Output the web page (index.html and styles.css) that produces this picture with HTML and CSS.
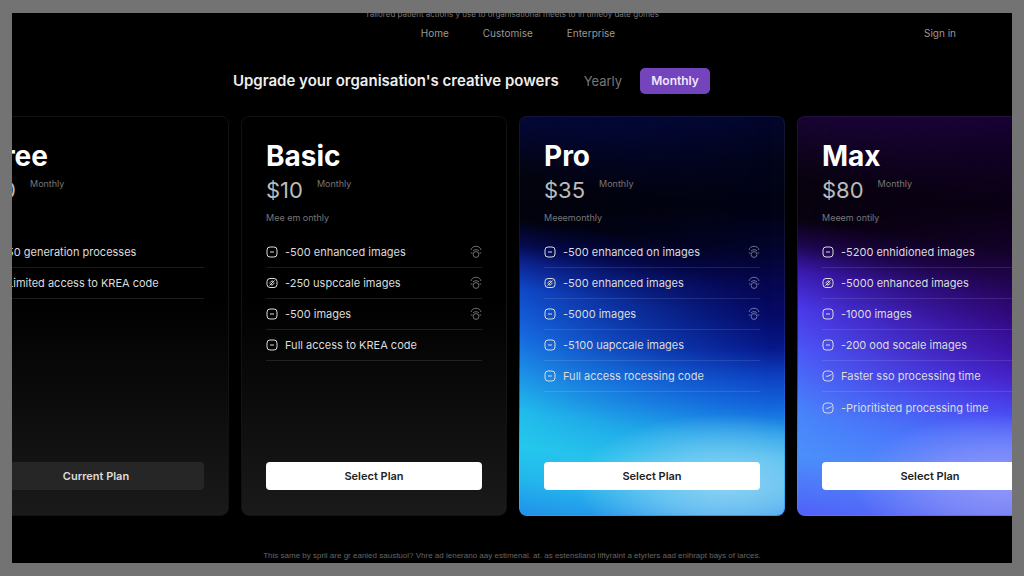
FILE: index.html
```html
<!DOCTYPE html>
<html lang="en">
<head>
<meta charset="utf-8">
<meta name="viewport" content="width=device-width, initial-scale=1">
<title>Upgrade plans</title>
<link rel="stylesheet" href="styles.css">
</head>
<body>
<svg class="sprite" aria-hidden="true">
  <symbol id="box" viewBox="0 0 12 12"><rect x="1" y="1" width="10" height="10" rx="3"/><path d="M4 6h4"/></symbol>
  <symbol id="slash" viewBox="0 0 12 12"><rect x="1" y="1.500" width="10" height="9" rx="3"/><path d="M3.500 8.500l5-5M4 6.500c0-2 1.500-2.500 3-2.500M8 5.500c0 2-1.500 2.500-3 2.500"/></symbol>
  <symbol id="check" viewBox="0 0 12 12"><rect x="1" y="1" width="10" height="10" rx="3.5"/><path d="M4 6.200h2L9.500 4.500"/></symbol>
  <symbol id="info" viewBox="0 0 12 14"><path d="M1 5C1.600 2.500 3.500 1.300 6 1.300S10.400 2.500 11 5M3 6c1-1.700 5-1.700 6 0M.800 8H2.500M9.500 8h1.700"/><circle cx="6" cy="9.500" r="2.900"/></symbol>
</svg>
<div class="frame">
  <p class="announcement">Tailored patient actions y'use to organisational meets to in timeoy date gomes</p>
  <header class="topbar">
    <nav class="nav">
      <a href="#">Home</a>
      <a href="#">Customise</a>
      <a href="#">Enterprise</a>
    </nav>
    <a class="signin" href="#">Sign in</a>
  </header>
  <main>
    <div class="billing">
      <h1>Upgrade your organisation's creative powers</h1>
      <div class="toggle">
        <button type="button" class="period">Yearly</button>
        <button type="button" class="period active">Monthly</button>
      </div>
    </div>
    <div class="plans">
      <section class="card">
        <h2>Free</h2>
        <p class="price"><span>$0</span><small>Monthly</small></p>
        <p class="note"></p>
        <ul>
          <li><svg><use href="#box"/></svg><span>50 generation processes</span></li>
          <li><svg><use href="#box"/></svg><span>Limited access to KREA code</span></li>
        </ul>
        <button type="button" class="select current">Current Plan</button>
      </section>
      <section class="card">
        <h2>Basic</h2>
        <p class="price"><span>$10</span><small>Monthly</small></p>
        <p class="note">Mee em onthly</p>
        <ul>
          <li><svg><use href="#box"/></svg><span>-500 enhanced images</span><svg class="info"><use href="#info"/></svg></li>
          <li><svg><use href="#slash"/></svg><span>-250 uspccale images</span><svg class="info"><use href="#info"/></svg></li>
          <li><svg><use href="#box"/></svg><span>-500 images</span><svg class="info"><use href="#info"/></svg></li>
          <li><svg><use href="#box"/></svg><span>Full access to KREA code</span></li>
        </ul>
        <button type="button" class="select">Select Plan</button>
      </section>
      <section class="card pro">
        <h2>Pro</h2>
        <p class="price"><span>$35</span><small>Monthly</small></p>
        <p class="note">Meeemonthly</p>
        <ul>
          <li><svg><use href="#box"/></svg><span>-500 enhanced on images</span><svg class="info"><use href="#info"/></svg></li>
          <li><svg><use href="#slash"/></svg><span>-500 enhanced images</span><svg class="info"><use href="#info"/></svg></li>
          <li><svg><use href="#box"/></svg><span>-5000 images</span><svg class="info"><use href="#info"/></svg></li>
          <li><svg><use href="#box"/></svg><span>-5100 uapccale images</span></li>
          <li><svg><use href="#box"/></svg><span>Full access rocessing code</span></li>
        </ul>
        <button type="button" class="select">Select Plan</button>
      </section>
      <section class="card max">
        <h2>Max</h2>
        <p class="price"><span>$80</span><small>Monthly</small></p>
        <p class="note">Meeem ontily</p>
        <ul>
          <li><svg><use href="#box"/></svg><span>-5200 enhidioned images</span></li>
          <li><svg><use href="#slash"/></svg><span>-5000 enhanced images</span></li>
          <li><svg><use href="#box"/></svg><span>-1000 images</span></li>
          <li><svg><use href="#box"/></svg><span>-200 ood socale images</span></li>
          <li><svg><use href="#check"/></svg><span>Faster sso processing time</span></li>
          <li><svg><use href="#check"/></svg><span>-Prioritisted processing time</span></li>
        </ul>
        <button type="button" class="select">Select Plan</button>
      </section>
    </div>
  </main>
  <footer class="footnote">This same by spril are gr eanied saustuol? Vhre ad lenerano aay estimenal. at. as estensliand liftyraint a etyrlers aad enihrapt bays of iarces.</footer>
</div>
</body>
</html>
```
FILE: styles.css
```css
* {
  box-sizing: border-box;
  margin: 0;
  padding: 0;
}

body {
  display: flex;
  min-height: 100vh;
  padding: 13px 12px;
  background: #737373;
  color: #e6e6e6;
  font-family: Inter, "Liberation Sans", sans-serif;
}

a {
  color: inherit;
  text-decoration: none;
}

button {
  border: 0;
  font: inherit;
  cursor: pointer;
}

.sprite {
  position: absolute;
  width: 0;
  height: 0;
}

.frame {
  flex: 1;
  min-width: 0;
  overflow: hidden;
  background: #000;
}

.announcement {
  margin-top: -5px;
  color: #777;
  font-size: 8px;
  line-height: 12px;
  text-align: center;
}

.topbar {
  display: grid;
  grid-template-columns: 1fr auto 1fr;
  align-items: center;
  margin-top: 3px;
  padding: 0 56px 0 68px;
  color: #999;
  font-size: 10px;
  line-height: 20px;
}

.nav {
  display: flex;
  grid-column: 2;
  gap: 34px;
}

.signin {
  justify-self: end;
}

.billing {
  display: flex;
  align-items: center;
  justify-content: center;
  gap: 25px;
  margin-top: 25px;
  padding-right: 81px;
}

h1 {
  color: #eee;
  font-size: 15px;
  font-weight: 600;
  line-height: 26px;
}

.toggle {
  display: flex;
  gap: 18px;
}

.period {
  background: none;
  color: #777;
  font-size: 13px;
  line-height: 26px;
}

.active {
  width: 70px;
  border-radius: 5px;
  background: #7344bc;
  color: #f0e6ff;
  font-size: 12px;
  font-weight: 600;
}

.plans {
  display: flex;
  justify-content: center;
  gap: 12px;
  margin-top: 22px;
  padding-left: 2px;
}

.card {
  position: relative;
  display: flex;
  flex: 0 0 266px;
  flex-direction: column;
  min-height: 400px;
  padding: 22px 24px 25px;
  overflow: hidden;
  border: 1px solid #121212;
  border-radius: 8px;
  background: linear-gradient(#000 45%, #0b0b0b 70%, #1a1a1a);
  isolation: isolate;
}

/* The left-hand colour ramp fades over the card's own right-hand ramp. */
.pro::before,
.max::before {
  position: absolute;
  inset: -1px;
  z-index: -1;
  content: "";
  mask-image: linear-gradient(to right, #000, #0007 50%, transparent 95%);
}

.pro {
  border-color: #ffffff10;
  background: linear-gradient(#03062c, #02041c 10%, #010212 22%, #03042a 32%, #050650 42%, #050a66 50%, #07188a 58%, #0d40c0 65%, #1362dc 72%, #1f9ae8 80%, #2fb4ee 86%, #34b0ee 93%, #2a90ec) border-box;
}

.pro::before {
  background: linear-gradient(188deg, #050a48, #040735 10%, #02030c 23%, #01020c 32%, #050a50 38%, #0c2490 42%, #1048c8 48%, #1668e0 58%, #1d90e6 67%, #22bcea 76%, #25c8ec 84%, #22b8ec 91%, #2090e8);
}

.max {
  border-color: #ffffff10;
  background: linear-gradient(#170230, #0f0120 10%, #0a0114 22%, #14022a 32%, #22044e 42%, #2e0470 50%, #3a0a98 58%, #4418c0 65%, #4a38e8 72%, #4e62fc 80%, #5a78fc 88%, #5c60f4) border-box;
}

.max::before {
  background: linear-gradient(188deg, #22054a, #16042f 10%, #08020f 23%, #08010f 32%, #1e0650 38%, #3a1ab0 44%, #4a38e8 52%, #4c58f8 62%, #4884fa 76%, #4a90fb 86%, #5060f8);
}

.pro::after,
.max::after {
  position: absolute;
  inset: -1px;
  z-index: -1;
  content: "";
}

.pro::after {
  background: radial-gradient(ellipse 150px 70px at 78% 92%, #98d6f4e0, #98d6f490 45%, #98d6f400);
}

.max::after {
  background: radial-gradient(ellipse 150px 70px at 78% 92%, #989cf8e0, #989cf890 45%, #989cf800);
}

h2 {
  color: #fff;
  font-size: 28px;
  font-weight: 700;
  line-height: 34px;
}

.price {
  display: flex;
  align-items: flex-start;
  gap: 14px;
  color: #bbb;
  font-size: 22px;
  line-height: 34px;
}

.price small {
  color: #777;
  font-size: 9px;
  line-height: 22px;
}

.note {
  min-height: 22px;
  color: #777;
  font-size: 9px;
  line-height: 22px;
}

ul {
  margin-top: 8px;
  list-style: none;
}

li {
  display: flex;
  align-items: center;
  gap: 7px;
  height: 31px;
  border-bottom: 1px solid #ffffff1c;
  color: #dcdcdc;
  font-size: 11px;
  white-space: nowrap;
}

.max li:last-child {
  border-bottom: 0;
}

li svg {
  flex: none;
  width: 12px;
  height: 12px;
  fill: none;
  stroke: currentColor;
  stroke-width: 1;
}

li .info {
  height: 14px;
  margin-left: auto;
  opacity: 0.5;
}

.select {
  margin-top: auto;
  border-radius: 4px;
  background: #fff;
  color: #222;
  font-size: 11px;
  font-weight: 600;
  line-height: 28px;
}

.current {
  background: #262626;
  color: #ddd;
}

.footnote {
  margin-top: 34px;
  color: #666;
  font-family: "Liberation Sans", sans-serif;
  font-size: 8px;
  line-height: 12px;
  text-align: center;
}
```
